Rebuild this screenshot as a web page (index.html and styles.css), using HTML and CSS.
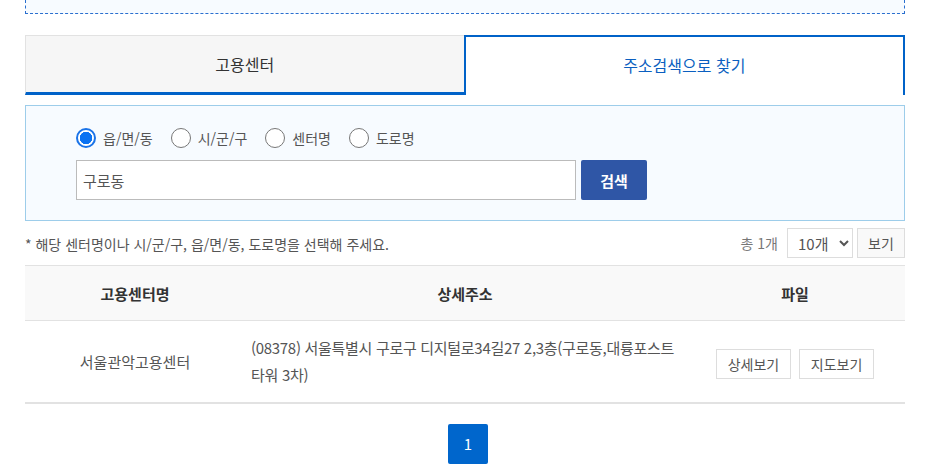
FILE: index.html
```html
<!DOCTYPE html>
<html lang="ko">

<head>
    <meta charset="UTF-8">
    <meta name="viewport" content="width=device-width, initial-scale=1.0">
    <title>고용센터 찾기</title>
    <link rel="stylesheet" href="styles.css">
</head>

<body>
    <div class="wrap">
        <div class="topBox"></div>

        <ul class="tabs">
            <li class="tab">고용센터</li>
            <li class="tab on">주소검색으로 찾기</li>
        </ul>

        <div class="searchBox">
            <div class="radios">
                <label class="radio"><input type="radio" name="type" checked>읍/면/동</label>
                <label class="radio"><input type="radio" name="type">시/군/구</label>
                <label class="radio"><input type="radio" name="type">센터명</label>
                <label class="radio"><input type="radio" name="type">도로명</label>
            </div>
            <div class="searchRow">
                <input class="searchInput" type="text" value="구로동">
                <button class="searchBtn">검색</button>
            </div>
        </div>

        <div class="infoRow">
            <p class="notice">* 해당 센터명이나 시/군/구, 읍/면/동, 도로명을 선택해 주세요.</p>
            <div class="listCtrl">
                <span class="total">총 1개</span>
                <select class="perPage">
                    <option>10개</option>
                    <option>20개</option>
                </select>
                <button class="viewBtn">보기</button>
            </div>
        </div>

        <table class="list">
            <colgroup>
                <col class="c1">
                <col class="c2">
                <col class="c3">
            </colgroup>
            <thead>
                <tr>
                    <th>고용센터명</th>
                    <th>상세주소</th>
                    <th>파일</th>
                </tr>
            </thead>
            <tbody>
                <tr>
                    <td>서울관악고용센터</td>
                    <td class="addr">(08378) 서울특별시 구로구 디지털로34길27 2,3층(구로동,대륭포스트 타워 3차)</td>
                    <td>
                        <button class="smBtn">상세보기</button>
                        <button class="smBtn">지도보기</button>
                    </td>
                </tr>
            </tbody>
        </table>

        <div class="paging">
            <a class="page on" href="#">1</a>
        </div>
    </div>
</body>

</html>
```

FILE: styles.css
```css
* {
    padding: 0px;
    margin: 0px;
    list-style: none;
    box-sizing: border-box;
}

body {
    font-family: "Noto Sans CJK KR", "Noto Sans", sans-serif;
    color: #555;
    background: #fff;
}

.wrap {
    width: 880px;
    margin-left: 25px;
}

.topBox {
    height: 14px;
    background-color: #f7fbff;
    border: 1px dashed #2a6fcf;
    border-top: none;
}

/* 탭 */
.tabs {
    display: flex;
    margin-top: 21px;
    height: 60px;
}

.tabs .tab {
    flex: 1;
    display: flex;
    align-items: center;
    justify-content: center;
    font-size: 16px;
    color: #333;
    background-color: #f6f6f6;
    border-top: 1px solid #e2e2e2;
    border-left: 1px solid #e2e2e2;
    border-bottom: 3px solid #0062c8;
}

.tabs .tab.on {
    color: #0b5fc0;
    background-color: #fff;
    border: 2px solid #0062c8;
    border-bottom: none;
    padding-bottom: 3px;
}

/* 검색 */
.searchBox {
    margin-top: 10px;
    padding: 21px 50px 20px;
    background-color: #f7fbff;
    border: 1px solid #9dcdea;
}

.radios {
    display: flex;
    align-items: center;
    height: 22px;
    gap: 18px;
}

.radio {
    display: flex;
    align-items: center;
    gap: 7px;
    font-size: 14px;
    color: #555;
}

.radio input {
    appearance: none;
    -webkit-appearance: none;
    width: 20px;
    height: 20px;
    border: 1px solid #777;
    border-radius: 50%;
    background-color: #fff;
}

.radio input:checked {
    border: 2px solid #1a73e8;
    background: radial-gradient(circle, #0a72f2 0 6px, #fff 6.5px);
}

.searchRow {
    display: flex;
    gap: 5px;
    margin-top: 11px;
}

.searchInput {
    width: 500px;
    height: 40px;
    border: 1px solid #bbb;
    padding: 0 6px;
    font-family: inherit;
    font-size: 15px;
    color: #555;
    background-color: #fff;
}

.searchBtn {
    width: 66px;
    height: 40px;
    border: none;
    border-radius: 2px;
    background-color: #2f56a6;
    color: #fff;
    font-family: inherit;
    font-size: 15px;
    font-weight: bold;
}

/* 목록 상단 */
.infoRow {
    display: flex;
    justify-content: space-between;
    align-items: center;
    height: 44px;
}

.notice {
    font-size: 14px;
    color: #555;
    margin-top: 1px;
}

.listCtrl {
    display: flex;
    align-items: center;
}

.total {
    font-size: 14px;
    color: #777;
    margin-right: 9px;
}

.perPage {
    width: 66px;
    height: 30px;
    border: 1px solid #ddd;
    padding: 0 6px;
    font-family: inherit;
    font-size: 15px;
    color: #555;
    background-color: #fff;
}

.viewBtn {
    width: 48px;
    height: 30px;
    margin-left: 4px;
    border: 1px solid #ddd;
    background-color: #f9f9f9;
    font-family: inherit;
    font-size: 14px;
    color: #555;
}

/* 테이블 */
.list {
    width: 100%;
    table-layout: fixed;
    border-collapse: collapse;
    border-top: 1px solid #e2e2e2;
}

.list .c1,
.list .c3 {
    width: 25%;
}

.list th {
    height: 55px;
    background-color: #f9f9f9;
    font-size: 15px;
    font-weight: bold;
    color: #333;
    border-bottom: 1px solid #e2e2e2;
}

.list td {
    height: 82px;
    text-align: center;
    font-size: 15px;
    color: #555;
    border-bottom: 2px solid #e2e2e2;
}

.list td.addr {
    text-align: left;
    padding: 0 0 0 6px;
    line-height: 27px;
    letter-spacing: -0.3px;
    word-break: keep-all;
}

.smBtn {
    width: 75px;
    height: 30px;
    margin: 6px 2px 0;
    border: 1px solid #ddd;
    background-color: #fff;
    font-family: inherit;
    font-size: 14px;
    color: #555;
}

/* 페이징 */
.paging {
    display: flex;
    justify-content: center;
    margin-top: 20px;
}

.page {
    display: flex;
    align-items: center;
    justify-content: center;
    width: 40px;
    height: 40px;
    border-radius: 2px;
    text-decoration: none;
    font-size: 15px;
    color: #fff;
    background-color: #0066cc;
    margin-left: 6px;
}
```
